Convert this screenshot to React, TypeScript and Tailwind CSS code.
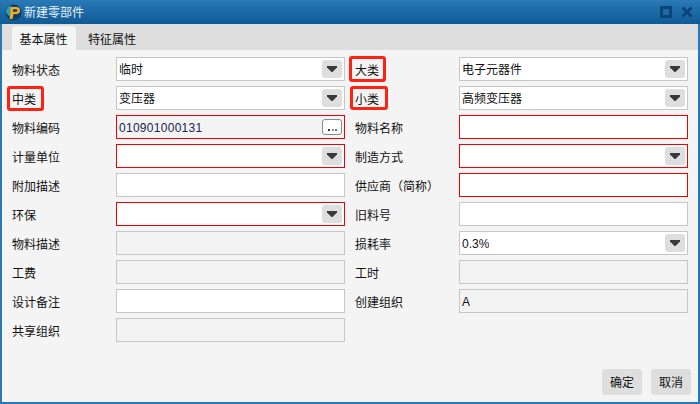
const FONT = "font-['Liberation_Sans','Noto_Sans_CJK_SC',sans-serif]";

function Caret() {
  return (
    <span className="flex h-[18px] w-5 shrink-0 items-center justify-center rounded-[3px] bg-[#dedede]">
      <svg width="10" height="6" viewBox="0 0 10 6">
        <path d="M0 0h10v1.5L5.5 6h-1L0 1.5z" fill="#3a3a3a" />
      </svg>
    </span>
  );
}

function Label({ text, mark }: { text: string; mark?: string }) {
  return (
    <div className="relative flex h-6 items-center pt-[3px] text-[#111]">
      {text}
      {mark && <span className={`absolute rounded-[3px] border-[3px] border-[#ff2112] ${mark}`} />}
    </div>
  );
}

function Field({
  value,
  kind,
  red,
  off,
  code,
}: {
  value?: string;
  kind?: "select" | "more";
  red?: boolean;
  off?: boolean;
  code?: boolean;
}) {
  const border = red ? "border-[#f00000]" : "border-[#c6c6c6]";
  const bg = off ? "bg-[#f3f3f3]" : "bg-white";
  const text = code ? "tracking-[0.28px] text-[#1a2450]" : "text-[#111]";
  return (
    <div className={`flex h-6 items-center justify-between border pl-[2px] pr-[2px] ${border} ${bg}`}>
      <span className={`truncate pt-[2px] ${text}`}>{value}</span>
      {kind === "select" && <Caret />}
      {kind === "more" && (
        <span className="flex h-4 w-5 items-end justify-center rounded-[3px] border border-[#8a8a8a] bg-white pb-[3px]">
          <span className="h-[2px] w-[9px] bg-[linear-gradient(90deg,#333_0_2px,transparent_2px_3.5px,#c08a30_3.5px_5.5px,transparent_5.5px_7px,#2a7fd0_7px_9px)]" />
        </span>
      )}
    </div>
  );
}

export default function App() {
  return (
    <div className={`flex h-[404px] w-[700px] flex-col border-x-2 border-b-2 border-[#2878b4] bg-[#f4f4f4] text-xs ${FONT}`}>
      <div className="-mx-[2px] flex h-6 shrink-0 items-center justify-between bg-[linear-gradient(#2a7ab6,#0f5a94)] pl-[5px] pr-[7px]">
        <div className="flex items-center gap-[2px] text-[#e6f0f8]">
          <svg width="17" height="17" viewBox="0 0 17 17">
            <circle cx="8.5" cy="8.5" r="8" fill="#0d3f6b" />
            <path d="M1 8.5a7.5 7.5 0 0 1 5-7L4.5 13z" fill="#27a3b8" />
            <path d="M5.5 3h6a3.4 3.4 0 0 1 0 7H8.6l-1.2 5H4.8z" fill="#f6ab1d" />
            <path d="M8.2 5.2h2.8a1.2 1.2 0 0 1 0 2.5H7.7z" fill="#0d3f6b" />
          </svg>
          <span className="pt-px">新建零部件</span>
        </div>
        <div className="flex items-center gap-[9px]">
          <svg width="12" height="12" viewBox="0 0 12 12">
            <rect x="1.5" y="1.5" width="9" height="9" fill="none" stroke="#0b4577" strokeWidth="3" />
          </svg>
          <svg width="12" height="12" viewBox="0 0 12 12">
            <path d="M1.5 1.5l9 9M10.5 1.5l-9 9" stroke="#0b4577" strokeWidth="3" />
          </svg>
        </div>
      </div>

      <div className="flex h-[26px] shrink-0 items-end bg-[#dedede] pl-[10px]">
        <div className="flex h-6 w-16 items-center justify-center rounded-t-[3px] bg-[#f4f4f4] pr-px pt-[3px] text-[#111]">基本属性</div>
        <div className="flex h-6 w-[72px] items-center justify-center pt-[3px] text-[#111]">特征属性</div>
      </div>

      <div className="grid grid-cols-[104px_229px_114px_229px] gap-y-[5px] pl-[10px] pt-[7px] [&>*:nth-child(4n+3)]:pl-[10px]">
        <Label text="物料状态" />
        <Field value="临时" kind="select" />
        <Label text="大类" mark="left-[4px] -top-px -bottom-px w-[37px]" />
        <Field value="电子元器件" kind="select" />

        <Label text="中类" mark="-left-[5px] top-0 -bottom-px w-[37px]" />
        <Field value="变压器" kind="select" />
        <Label text="小类" mark="left-[5px] top-0 bottom-0 w-[38px]" />
        <Field value="高频变压器" kind="select" />

        <Label text="物料编码" />
        <Field value="010901000131" kind="more" red off code />
        <Label text="物料名称" />
        <Field red />

        <Label text="计量单位" />
        <Field kind="select" red />
        <Label text="制造方式" />
        <Field kind="select" red />

        <Label text="附加描述" />
        <Field />
        <Label text="供应商（简称）" />
        <Field red />

        <Label text="环保" />
        <Field kind="select" red />
        <Label text="旧料号" />
        <Field />

        <Label text="物料描述" />
        <Field off />
        <Label text="损耗率" />
        <Field value="0.3%" kind="select" />

        <Label text="工费" />
        <Field off />
        <Label text="工时" />
        <Field off />

        <Label text="设计备注" />
        <Field />
        <Label text="创建组织" />
        <Field value="A" off />

        <Label text="共享组织" />
        <Field off />
      </div>

      <div className="mt-auto flex justify-end gap-[9px] pb-[7px] pr-[7px]">
        <button className="h-[26px] w-10 rounded-[3px] bg-[#dedede] pt-px text-[#111]">确定</button>
        <button className="h-[26px] w-10 rounded-[3px] bg-[#dedede] pt-px text-[#111]">取消</button>
      </div>
    </div>
  );
}
